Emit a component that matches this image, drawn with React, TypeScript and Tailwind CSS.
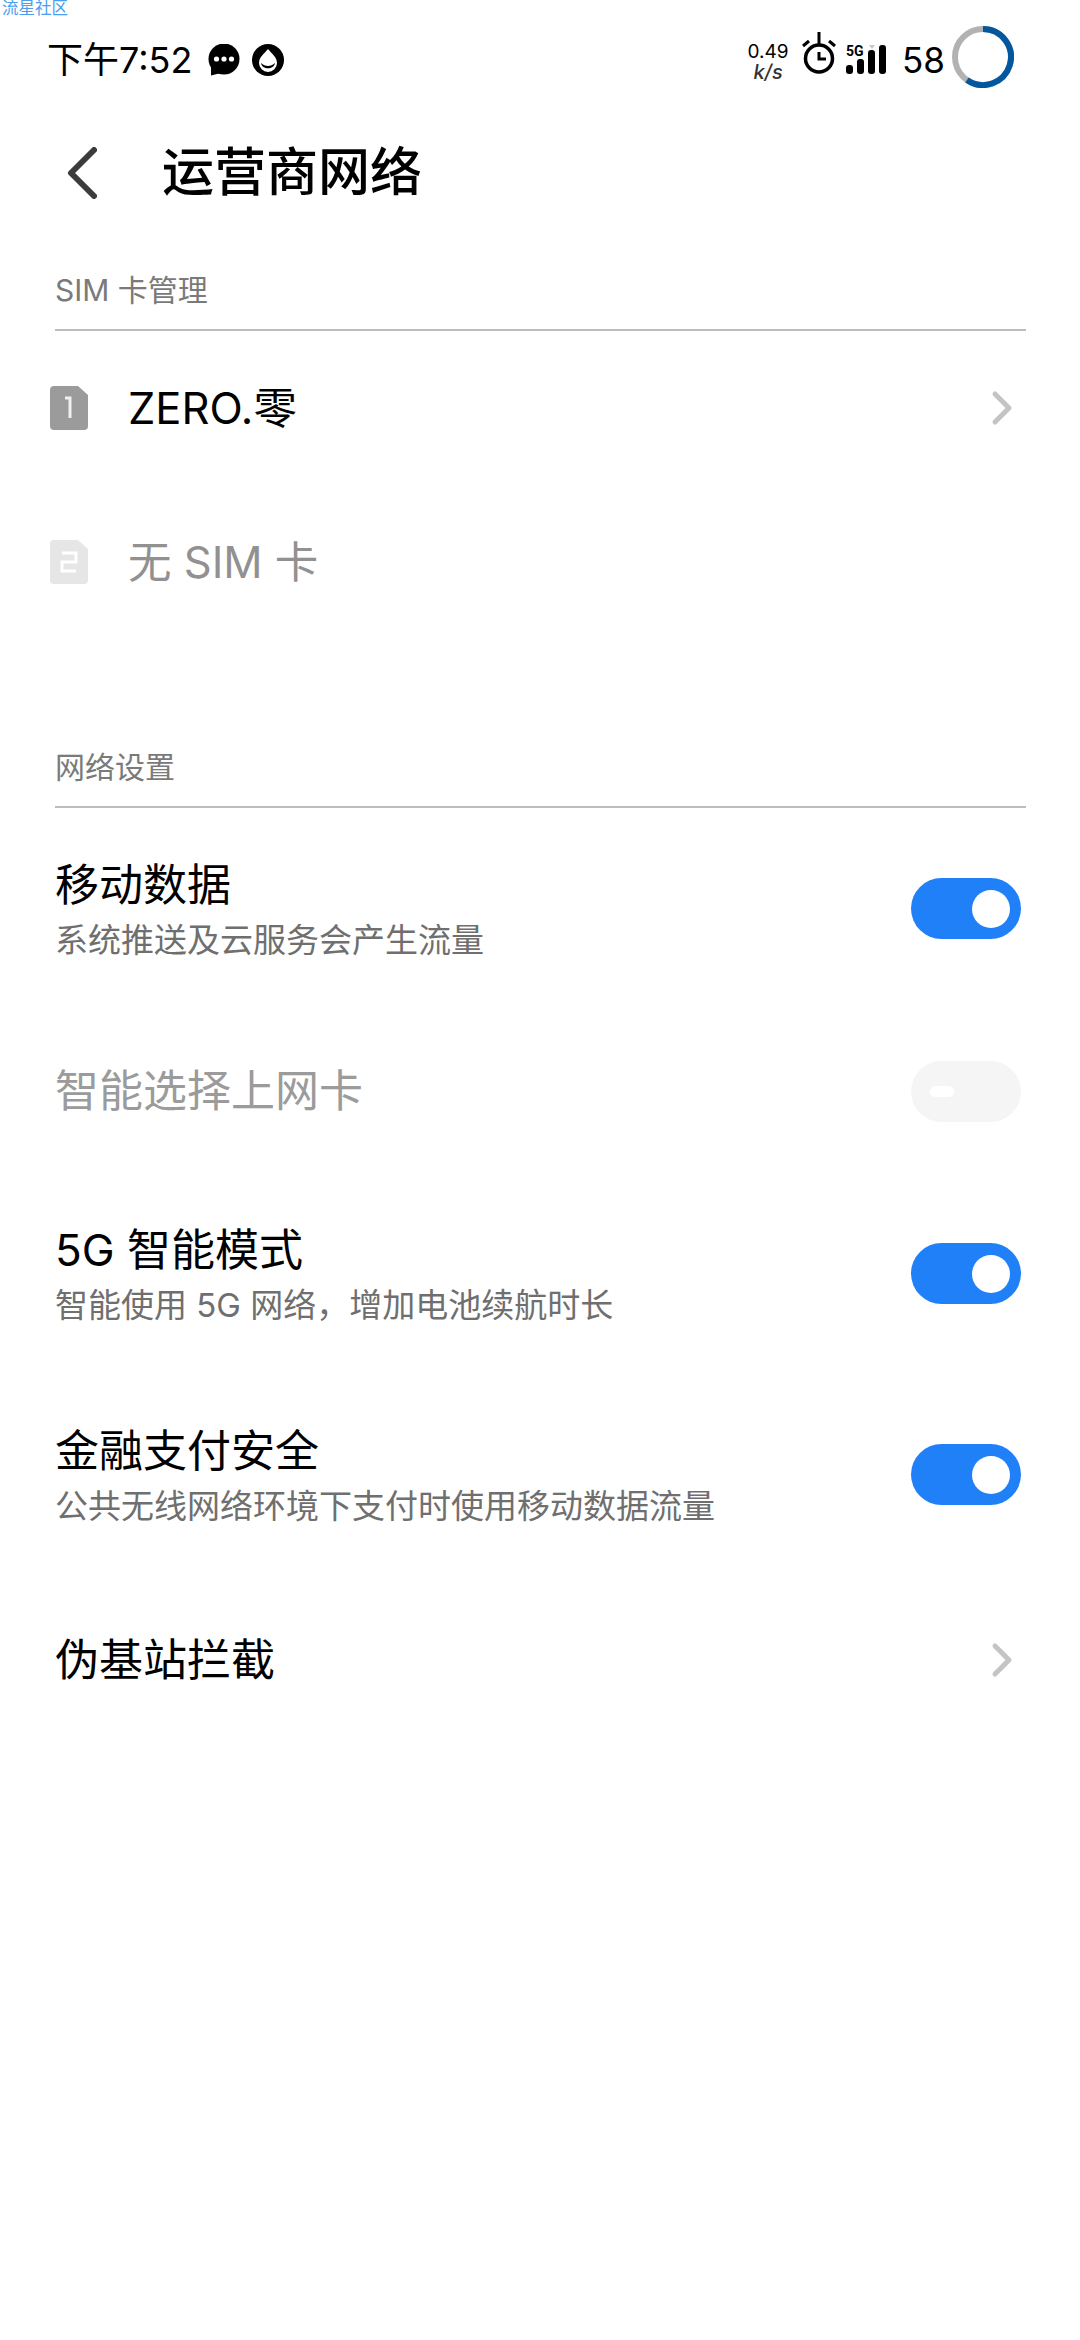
const font = { fontFamily: '"Inter", "Noto Sans CJK SC", sans-serif' }

function Chevron() {
  return (
    <svg width="24" height="36" viewBox="0 0 24 36" className="mr-[6px] shrink-0">
      <path d="M4 4 L18 18 L4 32" fill="none" stroke="#c4c4c4" strokeWidth="5" strokeLinecap="round" strokeLinejoin="round" />
    </svg>
  )
}

function Toggle({ on }: { on: boolean }) {
  if (!on) {
    return (
      <div className="flex h-[61px] w-[110px] shrink-0 items-center rounded-full bg-[#f5f5f5] pl-[19px]">
        <div className="h-[11px] w-[24px] rounded-full bg-white" />
      </div>
    )
  }
  return (
    <div className="flex h-[61px] w-[110px] shrink-0 items-center justify-end rounded-full bg-[#2080f7] pr-[11px]">
      <div className="h-[38px] w-[38px] rounded-full bg-white" />
    </div>
  )
}

function SimIcon({ n, dim }: { n: string; dim?: boolean }) {
  return (
    <svg width="38" height="44" viewBox="0 0 38 44" className="shrink-0">
      <path
        d="M4 0 H28 L38 9 V40 A4 4 0 0 1 34 44 H4 A4 4 0 0 1 0 40 V4 A4 4 0 0 1 4 0 Z"
        fill={dim ? '#e6e6e6' : '#9b9b9b'}
      />
      {n === '1' ? (
        <path d="M15 12 H20 V32" fill="none" stroke="#fff" strokeOpacity="0.85" strokeWidth="3" />
      ) : (
        <path d="M12 13 H26 V22 H12 V31 H26" fill="none" stroke="#fff" strokeWidth="3" />
      )}
    </svg>
  )
}

function SectionHeader({ title, className }: { title: string; className?: string }) {
  return (
    <div className={`ml-[55px] mr-[54px] flex h-[61px] items-start border-b-2 border-[#bdbdbd] text-[30px] leading-[40px] text-[#7a7a7a] ${className ?? ''}`}>
      {title}
    </div>
  )
}

function ToggleRow({ title, desc, className }: { title: string; desc: string; className?: string }) {
  return (
    <div className={`flex items-start justify-between pl-[55px] pr-[59px] ${className ?? ''}`}>
      <div className="flex flex-col">
        <span className="text-[44px] leading-[56px] text-black">{title}</span>
        <span className="mt-[5px] text-[33px] leading-[44px] text-[#6f6f6f]">{desc}</span>
      </div>
      <div className="pt-[21px]">
        <Toggle on />
      </div>
    </div>
  )
}

function StatusBar() {
  return (
    <div className="flex h-[87px] items-end justify-between pl-[47px] pr-[66px]">
      <div className="flex items-center pb-[5px]">
        <span className="text-[36px] leading-[44px] text-black">下午7:52</span>
        <svg width="32" height="32" viewBox="0 0 32 32" className="ml-[16px]">
          <circle cx="16" cy="15" r="15.5" fill="#000" />
          <path d="M3 23 L3 31.5 L13 29 Z" fill="#000" />
          <circle cx="8.5" cy="15" r="2.6" fill="#fff" />
          <circle cx="16" cy="15" r="2.6" fill="#fff" />
          <circle cx="23.5" cy="15" r="2.6" fill="#fff" />
        </svg>
        <svg width="32" height="32" viewBox="0 0 32 32" className="ml-[12px]">
          <circle cx="16" cy="16" r="16" fill="#000" />
          <path d="M16 5 C20 10 25 13 25 19 A9 9 0 0 1 7 19 C7 13 12 10 16 5 Z" fill="#fff" />
          <path d="M9 19 C13 23 19 23 23 19 C22 26 10 26 9 19 Z" fill="#000" />
        </svg>
      </div>
      <div className="flex items-end">
        <div className="mb-[5px] flex w-[40px] flex-col items-center text-black">
          <span className="text-[19px] leading-[20px]">0.49</span>
          <span className="text-[20px] leading-[20px] font-medium italic text-[#333]">k/s</span>
        </div>
        <svg width="34" height="44" viewBox="0 0 34 44" className="mb-[13px] ml-[14px]">
          <circle cx="17" cy="28.5" r="13.5" fill="none" stroke="#000" strokeWidth="3.5" />
          <path d="M17 2 V15 M17 22 V29 H24" fill="none" stroke="#000" strokeWidth="3" />
          <path d="M1 16 L7 11 M33 16 L27 11" stroke="#000" strokeWidth="3" />
        </svg>
        <svg width="40" height="30" viewBox="0 0 40 30" className="mb-[13px] ml-[10px]">
          <text x="0" y="12" fontSize="14" fontWeight="700" fill="#000" fontFamily="Roboto, sans-serif">5G</text>
          <path d="M23 1 H29 L26 5 Z" fill="#c8c8c8" />
          <rect x="0" y="21" width="7" height="9" rx="3" fill="#000" />
          <rect x="11" y="15" width="7" height="15" rx="3" fill="#000" />
          <rect x="22" y="6" width="7" height="24" rx="3" fill="#000" />
          <rect x="33" y="1" width="7" height="29" rx="3" fill="#000" />
        </svg>
        <span className="mb-[5px] ml-[16px] text-[35px] leading-[44px] text-black">58</span>
        <svg width="62" height="62" viewBox="0 0 62 62" className="mb-[-1px] ml-[7px]">
          <circle cx="31" cy="31" r="28" fill="none" stroke="#b2b2b2" strokeWidth="6" />
          <path d="M31 3 A28 28 0 1 1 15 54" fill="none" stroke="#02579f" strokeWidth="6" />
        </svg>
      </div>
    </div>
  )
}

export default function App() {
  return (
    <div className="relative flex h-[2340px] w-[1080px] flex-col overflow-hidden bg-white" style={font}>
      <span className="absolute left-[2px] top-0 text-[16.5px] leading-[17px] text-[#4a9df0]">流星社区</span>
      <StatusBar />

      <div className="mt-[53px] flex h-[66px] items-center pl-[67px]">
        <svg width="30" height="52" viewBox="0 0 30 52" className="shrink-0">
          <path d="M27 3 L4 26 L27 49" fill="none" stroke="#3c3c3c" strokeWidth="6" strokeLinecap="round" strokeLinejoin="round" />
        </svg>
        <span className="ml-[65px] text-[52px] font-medium leading-[66px] text-black">运营商网络</span>
      </div>

      <SectionHeader title="SIM 卡管理" className="mt-[64px]" />

      <div className="mt-[47px] flex h-[60px] items-center justify-between pl-[50px] pr-[59px]">
        <div className="flex items-center">
          <SimIcon n="1" />
          <span className="ml-[40px] text-[43.5px] leading-[60px] text-black">ZERO.零</span>
        </div>
        <Chevron />
      </div>

      <div className="mt-[94px] flex h-[60px] items-center pl-[50px]">
        <SimIcon n="2" dim />
        <span className="ml-[40px] text-[43.5px] leading-[60px] text-[#919191]">无 SIM 卡</span>
      </div>

      <SectionHeader title="网络设置" className="mt-[155px]" />

      <ToggleRow title="移动数据" desc="系统推送及云服务会产生流量" className="mt-[49px]" />

      <div className="mt-[99px] flex items-center justify-between pl-[55px] pr-[59px]">
        <span className="text-[44px] leading-[61px] text-[#9b9b9b]">智能选择上网卡</span>
        <Toggle on={false} />
      </div>

      <ToggleRow title="5G 智能模式" desc="智能使用 5G 网络，增加电池续航时长" className="mt-[100px]" />
      <ToggleRow title="金融支付安全" desc="公共无线网络环境下支付时使用移动数据流量" className="mt-[96px]" />

      <div className="mt-[104px] flex h-[56px] items-center justify-between pl-[55px] pr-[59px]">
        <span className="text-[44px] leading-[56px] text-black">伪基站拦截</span>
        <Chevron />
      </div>
    </div>
  )
}
